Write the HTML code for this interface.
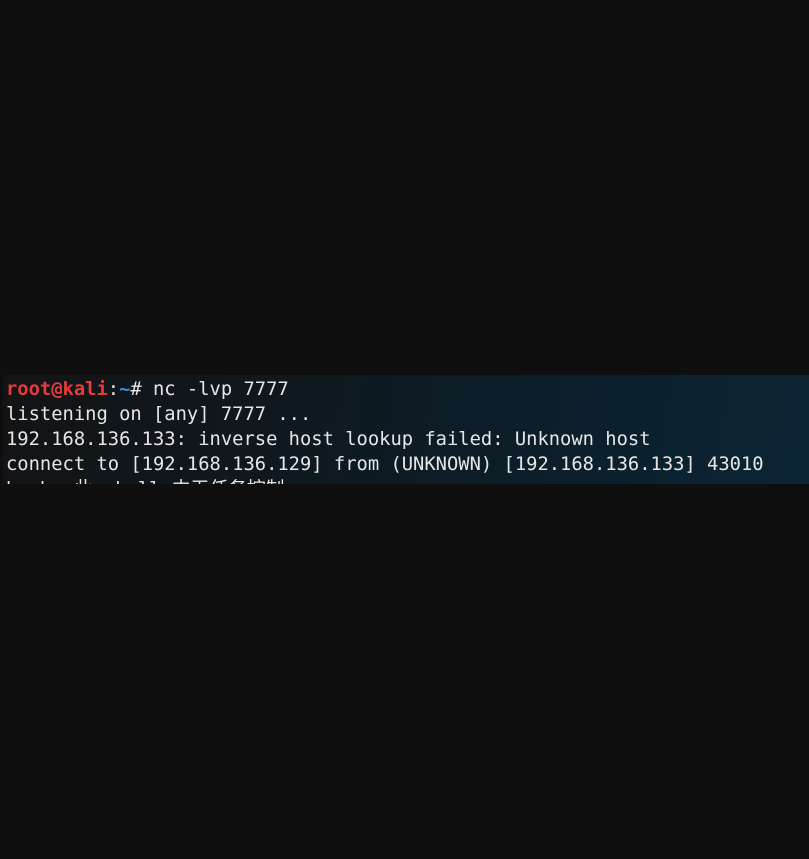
<!DOCTYPE html>
<html><head><meta charset="utf-8"><style>
html,body{margin:0;padding:0;background:#0f0f0f;width:809px;height:859px;overflow:hidden}
.term{position:absolute;left:3px;top:375px;width:806px;height:109px;overflow:hidden;
background:linear-gradient(100deg,#121416 0%,#0f1920 40%,#0b202d 75%,#0c2534 100%)}
.term pre{margin:0;position:absolute;left:3px;top:2px;font-family:"DejaVu Sans Mono","Liberation Mono","Noto Sans CJK SC",monospace;font-size:18.8px;line-height:25px;color:#e6e6e6}
.r{color:#e83a3a;font-weight:bold}.b{color:#3a8ee0;font-weight:bold}
</style></head><body>
<div class="term"><pre><span class="r">root@kali</span>:<span class="b">~</span># nc -lvp 7777
listening on [any] 7777 ...
192.168.136.133: inverse host lookup failed: Unknown host
connect to [192.168.136.129] from (UNKNOWN) [192.168.136.133] 43010
bash: 此 shell 中无任务控制</pre></div>
</body></html>
